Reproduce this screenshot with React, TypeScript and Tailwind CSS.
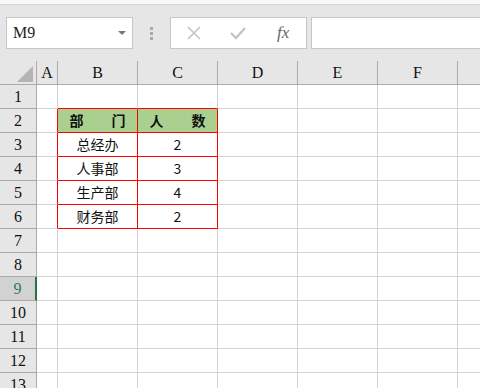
import React from 'react';

const cols = ['A', 'B', 'C', 'D', 'E', 'F', ''];
const colWidths = ['w-[21px]', 'w-[80px]', 'w-[80px]', 'w-[80px]', 'w-[80px]', 'w-[80px]', 'flex-1'];

const data: Record<number, [string, string]> = {
  2: ['部\u3000\u3000门', '人\u3000\u3000数'],
  3: ['总经办', '2'],
  4: ['人事部', '3'],
  5: ['生产部', '4'],
  6: ['财务部', '2'],
};

const serif = { fontFamily: '"Liberation Serif", "DejaVu Serif", serif' };
const cjk = { fontFamily: '"Noto Sans CJK SC", "Noto Sans", sans-serif' };

const Toolbar: React.FC = () => (
  <div className="h-[61px] bg-[#e6e6e6] flex flex-col">
    <div className="h-[5px] bg-[#f8f8f8] border-b border-[#d6d6d6]" />
    <div className="flex items-start pt-[12px]">
      <div className="ml-[6px] w-[127px] h-[32px] bg-white border border-[#c6c6c6] flex items-center justify-between pl-[6px] pr-[6px]">
        <span className="text-[16px] text-[#222]" style={serif}>M9</span>
        <span className="w-0 h-0 border-l-[4px] border-r-[4px] border-t-[4px] border-l-transparent border-r-transparent border-t-[#777]" />
      </div>
      <div className="w-[37px] h-[32px] flex flex-col items-center justify-center gap-[2px]">
        <span className="w-[3px] h-[3px] bg-[#a8a8a8]" />
        <span className="w-[3px] h-[3px] bg-[#a8a8a8]" />
        <span className="w-[3px] h-[3px] bg-[#a8a8a8]" />
      </div>
      <div className="w-[137px] h-[32px] bg-white border border-[#c6c6c6] flex items-center">
        <svg width="16" height="16" viewBox="0 0 16 16" className="ml-[15px]">
          <path d="M2 2 L14 14 M14 2 L2 14" stroke="#c4c4c4" strokeWidth="1.6" fill="none" />
        </svg>
        <svg width="18" height="16" viewBox="0 0 18 16" className="ml-[27px]">
          <path d="M2 8 L7 13 L16 3" stroke="#c4c4c4" strokeWidth="2.4" fill="none" />
        </svg>
        <span className="ml-[30px] text-[17px] italic text-[#666]" style={serif}>fx</span>
      </div>
      <div className="ml-[4px] flex-1 h-[32px] bg-white border border-[#c6c6c6] border-r-0" />
    </div>
  </div>
);

const App: React.FC = () => {
  const rows = Array.from({ length: 13 }, (_, i) => i + 1);
  return (
    <div className="w-[480px] h-[388px] overflow-hidden bg-white select-none">
      <Toolbar />
      <div className="flex h-[24px] bg-[#e6e6e6] border-b border-[#ababab]">
        <div className="w-[37px] border-r border-[#ababab] relative">
          <svg width="17" height="16" viewBox="0 0 17 16" className="absolute left-[17px] top-[5px]">
            <path d="M16 0 L16 16 L0 16 Z" fill="#b4b4b4" />
          </svg>
        </div>
        {cols.map((c, i) => (
          <div
            key={i}
            className={`${colWidths[i]} ${i < 6 ? 'border-r border-[#ababab]' : ''} flex items-center justify-center text-[16px] text-[#111]`}
            style={serif}
          >
            {c}
          </div>
        ))}
      </div>
      {rows.map((r) => {
        const sel = r === 9;
        const rowData = data[r];
        return (
          <div key={r} className="flex h-[24px]">
            <div
              className={`w-[37px] flex items-center justify-center text-[16px] border-b ${
                sel
                  ? 'bg-[#d2d2d2] text-[#2a7a6e] border-r-2 border-r-[#217346] border-b-[#ababab]'
                  : 'bg-[#e6e6e6] text-[#111] border-r border-[#ababab]'
              }`}
              style={serif}
            >
              {r}
            </div>
            {cols.map((_, i) => {
              const inTable = rowData && (i === 1 || i === 2);
              const aboveTable = r === 1 && (i === 1 || i === 2);
              const leftOfTable = rowData && i === 0;
              const isHead = r === 2 && inTable;
              const right = inTable || leftOfTable ? 'border-r border-r-[#ff0000]' : i < 6 ? 'border-r border-r-[#d4d4d4]' : '';
              const bottom = inTable || aboveTable ? 'border-b border-b-[#ff0000]' : 'border-b border-b-[#d4d4d4]';
              return (
                <div
                  key={i}
                  className={`${colWidths[i]} ${right} ${bottom} ${isHead ? 'bg-[#a9d08e] font-bold' : 'bg-white'} flex items-center justify-center text-[14px] text-[#111]`}
                  style={cjk}
                >
                  {inTable ? rowData[i - 1] : ''}
                </div>
              );
            })}
          </div>
        );
      })}
    </div>
  );
};

export default App;
